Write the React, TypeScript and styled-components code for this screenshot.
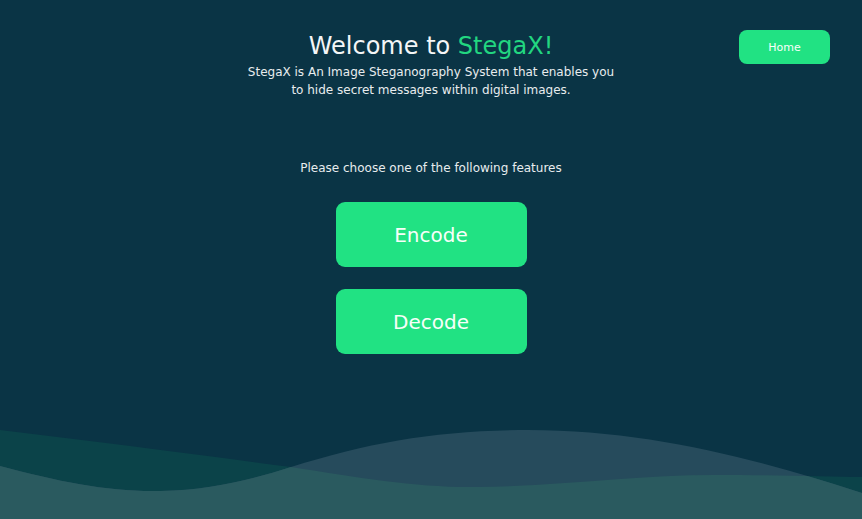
import React from "react";
import styled, { createGlobalStyle } from "styled-components";

const GlobalStyle = createGlobalStyle`
  html, body {
    margin: 0;
    padding: 0;
    background: #0a3445;
  }
  body {
    font-family: "DejaVu Sans", "Noto Sans", sans-serif;
    color: #f2f4f5;
  }
`;

const Page = styled.div`
  min-height: 100vh;
  display: flex;
  flex-direction: column;
  overflow: hidden;
`;

const Header = styled.header`
  display: grid;
  grid-template-columns: 1fr auto 1fr;
  align-items: start;
  padding: 30px 32px 0;
`;

const TitleBlock = styled.div`
  grid-column: 2;
  text-align: center;
  padding-top: 1px;
`;

const Title = styled.h1`
  margin: 0;
  font-size: 24px;
  font-weight: 400;
  line-height: 31px;
  color: #f4f6f7;
`;

const Brand = styled.span`
  color: #22d680;
`;

const Subtitle = styled.p`
  margin: 1px 0 0;
  font-size: 12px;
  line-height: 18px;
  color: #e8ecee;
`;

const HomeButton = styled.button`
  grid-column: 3;
  justify-self: end;
  width: 91px;
  height: 34px;
  border: none;
  border-radius: 8px;
  background: #21e283;
  color: #f7fff9;
  font-family: inherit;
  font-size: 11px;
  cursor: pointer;
`;

const Main = styled.main`
  display: flex;
  flex-direction: column;
  align-items: center;
  padding-top: 60px;
`;

const Prompt = styled.p`
  margin: 0 0 25px;
  font-size: 12px;
  line-height: 18px;
  color: #e8ecee;
`;

const FeatureList = styled.div`
  display: flex;
  flex-direction: column;
  gap: 22px;
`;

const FeatureButton = styled.button`
  width: 191px;
  height: 65px;
  border: none;
  border-radius: 9px;
  background: #21e283;
  color: #f7fff9;
  font-family: inherit;
  font-size: 20px;
  cursor: pointer;
`;

const Waves = styled.svg`
  display: block;
  margin-top: auto;
  width: 100%;
  height: 119px;
`;

const TEAL_WAVE =
  "M0 30 C100 42 200 55 291 67 C360 78 420 88 478 87 C560 86 640 75 715 75 C780 75 830 77 862 77 L862 119 L0 119 Z";
const GREY_WAVE =
  "M0 66 C60 82 110 92 160 91 C210 90 250 80 291 67 C370 42 440 30 528 30 C650 30 760 60 862 93 L862 119 L0 119 Z";

const WaveBackdrop = () => (
  <Waves viewBox="0 0 862 119" preserveAspectRatio="none">
    <defs>
      <clipPath id="teal-clip">
        <path d={TEAL_WAVE} />
      </clipPath>
    </defs>
    <path d={TEAL_WAVE} fill="#0b4349" />
    <path d={GREY_WAVE} fill="#264b5c" />
    <path d={GREY_WAVE} fill="#2a5a5f" clipPath="url(#teal-clip)" />
  </Waves>
);

const App = () => {
  return (
    <Page>
      <GlobalStyle />
      <Header>
        <TitleBlock>
          <Title>
            Welcome to <Brand>StegaX!</Brand>
          </Title>
          <Subtitle>
            StegaX is An Image Steganography System that enables you
            <br />
            to hide secret messages within digital images.
          </Subtitle>
        </TitleBlock>
        <HomeButton>Home</HomeButton>
      </Header>
      <Main>
        <Prompt>Please choose one of the following features</Prompt>
        <FeatureList>
          <FeatureButton>Encode</FeatureButton>
          <FeatureButton>Decode</FeatureButton>
        </FeatureList>
      </Main>
      <WaveBackdrop />
    </Page>
  );
};

export default App;
